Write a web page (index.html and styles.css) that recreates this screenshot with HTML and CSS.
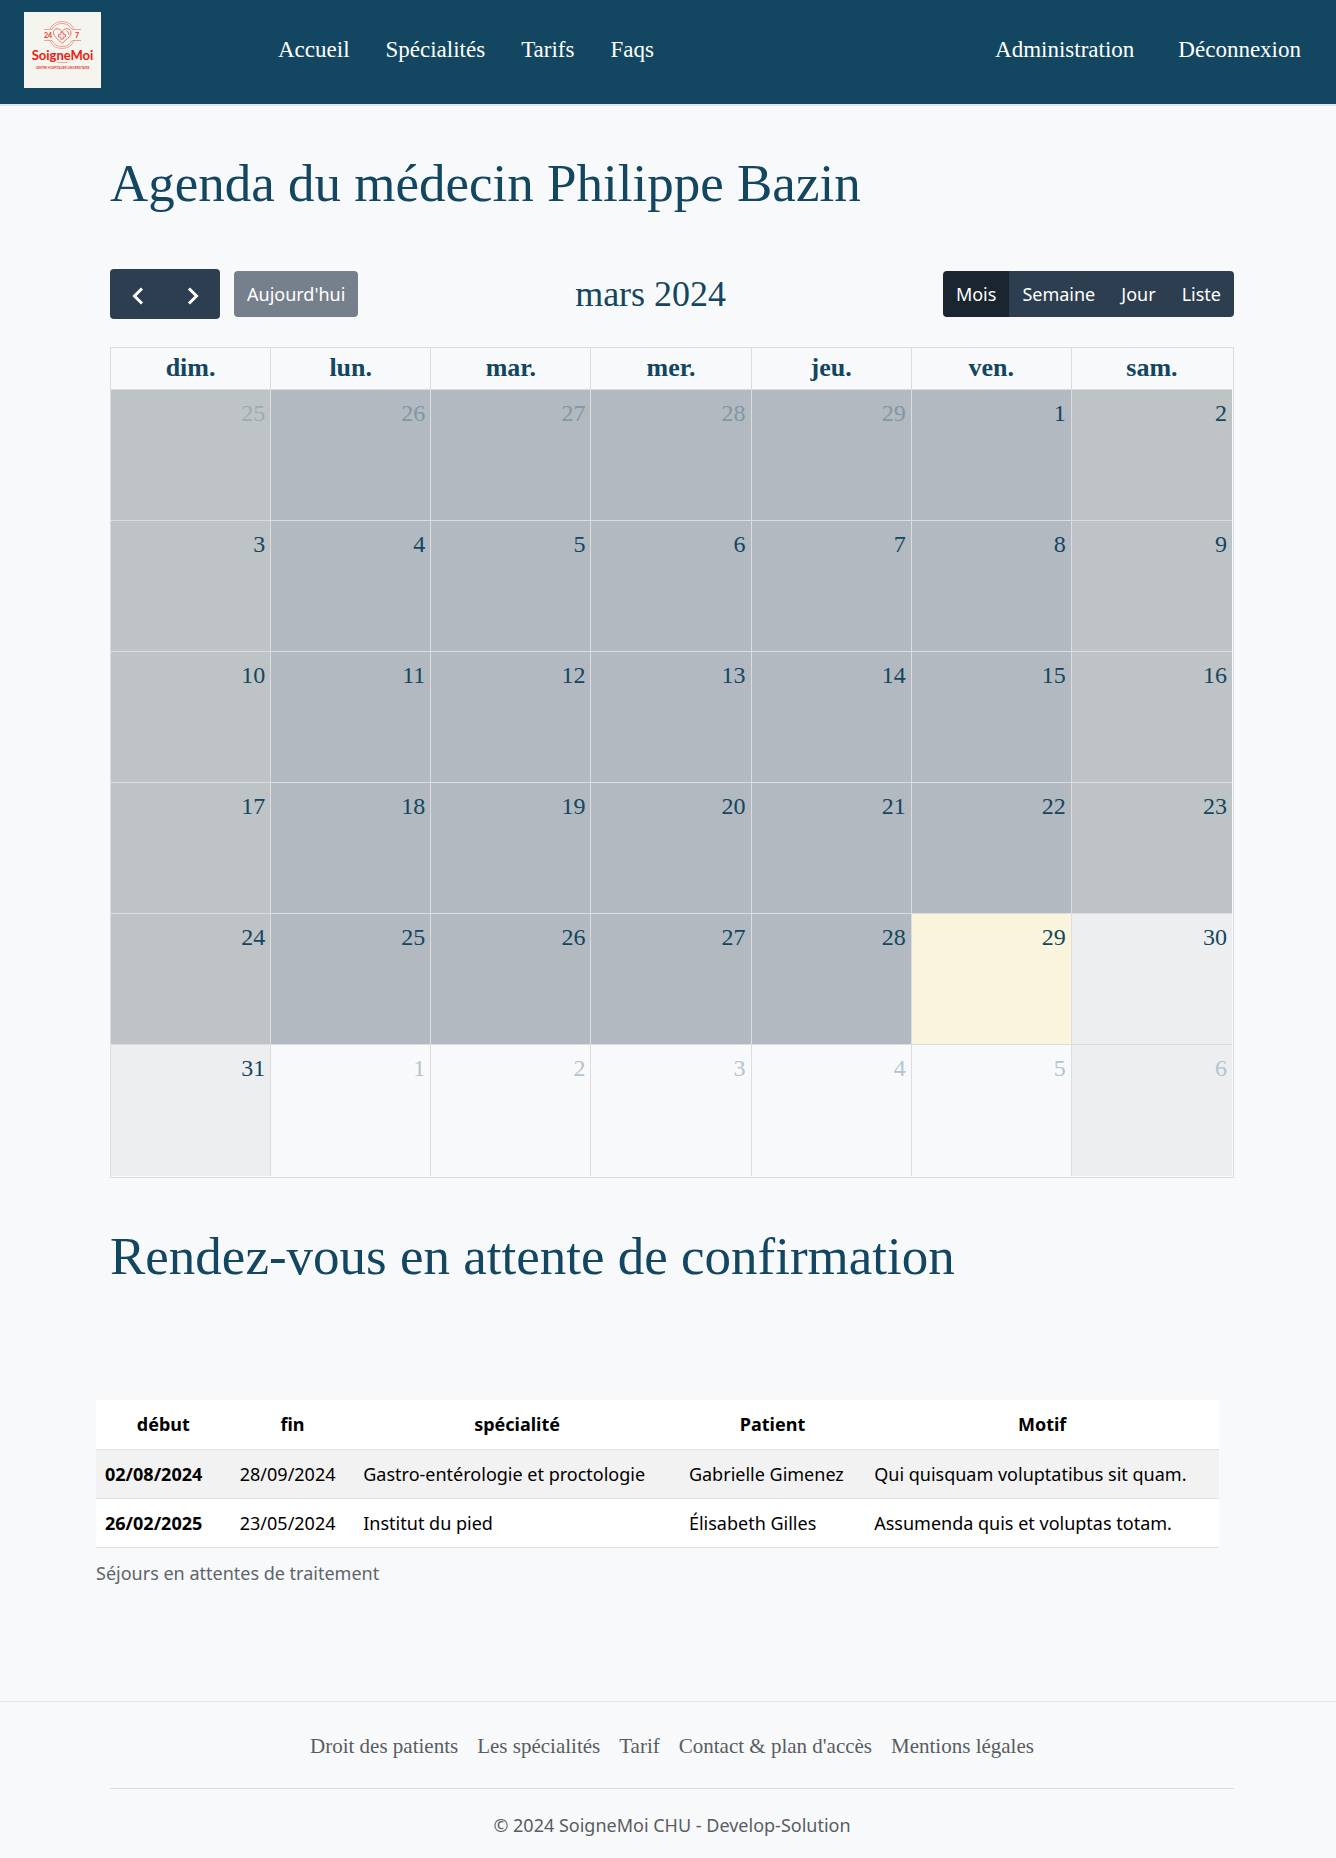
FILE: index.html
```html
<!DOCTYPE html>
<html lang="fr">
<head>
<meta charset="utf-8">
<meta name="viewport" content="width=device-width, initial-scale=1">
<title>SoigneMoi - Agenda du médecin</title>
<link rel="stylesheet" href="styles.css">
</head>
<body>
<header class="site-header">
  <a class="brand" href="#" aria-label="SoigneMoi">
    <svg class="logo" viewBox="0 0 77 76" role="img" aria-hidden="true">
      <rect width="77" height="76" fill="#f4f5ee"/>
      <g fill="none" stroke="#f0a098" stroke-width="1">
        <path d="M25.700 17.500A13.500 13.500 0 0 1 50.300 17.500M25.700 28.500A13.500 13.500 0 0 0 50.300 28.500"/>
        <path d="M27.900 17.500A11.500 11.500 0 0 1 48.100 17.500M27.900 28.500A11.500 11.500 0 0 0 48.100 28.500"/>
        <path d="M20 17.500H28M48 17.500H57M20 28.500H28M48 28.500H57M33.500 50.500H43.500"/>
      </g>
      <g fill="none" stroke="#e8695f" stroke-width="0.900">
        <path fill="#f4f5ee" d="M38 31.500L31 24.500C28.500 21.500 29 17 33 16.700C35.500 16.700 37 18 38 20C39 18 40.500 16.700 43 16.700C47.500 17 48 21.500 45.500 24.500Z"/>
        <path d="M36.800 20.300h2.400v2.200h2.300v2.400h-2.300v2.300h-2.400v-2.300h-2.300v-2.400h2.300zM42.500 18.800q3 1 2.300 4"/>
      </g>
      <g fill="#e8372c" class="logo-text">
        <text x="20" y="25.500" font-size="7">24</text>
        <text x="51" y="25.500" font-size="7">7</text>
        <text x="38.500" y="48" font-size="13" text-anchor="middle" fill="#f01a10">SoigneMoi</text>
        <text x="38.500" y="57" font-size="3" text-anchor="middle">CENTRE HOSPITALIER UNIVERSITAIRE</text>
      </g>
    </svg>
  </a>
  <nav class="main-nav" aria-label="Navigation principale">
    <a href="#">Accueil</a>
    <a href="#">Spécialités</a>
    <a href="#">Tarifs</a>
    <a href="#">Faqs</a>
  </nav>
  <nav class="user-nav" aria-label="Compte">
    <a href="#">Administration</a>
    <a href="#">Déconnexion</a>
  </nav>
</header>

<main>
  <section class="agenda">
    <h1 class="title">Agenda du médecin Philippe Bazin</h1>
    <div class="toolbar">
      <div class="toolbar-start">
        <div class="group">
          <button class="btn btn-icon" type="button" aria-label="Mois précédent"><svg width="12" height="18" viewBox="0 0 12 18"><path d="M10 1.500L2.500 9L10 16.500"/></svg></button>
          <button class="btn btn-icon" type="button" aria-label="Mois suivant"><svg width="12" height="18" viewBox="0 0 12 18"><path d="M2 1.500L9.500 9L2 16.500"/></svg></button>
        </div>
        <button class="btn btn-today" type="button" disabled>Aujourd'hui</button>
      </div>
      <h2 class="month">mars 2024</h2>
      <div class="group">
        <button class="btn btn-active" type="button" aria-pressed="true">Mois</button>
        <button class="btn" type="button">Semaine</button>
        <button class="btn" type="button">Jour</button>
        <button class="btn" type="button">Liste</button>
      </div>
    </div>
    <div class="calendar-frame">
    <table class="calendar">
      <thead>
        <tr><th>dim.</th><th>lun.</th><th>mar.</th><th>mer.</th><th>jeu.</th><th>ven.</th><th>sam.</th></tr>
      </thead>
      <tbody>
        <tr class="past"><td class="other">25</td><td class="other">26</td><td class="other">27</td><td class="other">28</td><td class="other">29</td><td>1</td><td>2</td></tr>
        <tr class="past"><td>3</td><td>4</td><td>5</td><td>6</td><td>7</td><td>8</td><td>9</td></tr>
        <tr class="past"><td>10</td><td>11</td><td>12</td><td>13</td><td>14</td><td>15</td><td>16</td></tr>
        <tr class="past"><td>17</td><td>18</td><td>19</td><td>20</td><td>21</td><td>22</td><td>23</td></tr>
        <tr class="past"><td>24</td><td>25</td><td>26</td><td>27</td><td>28</td><td class="today">29</td><td class="future">30</td></tr>
        <tr><td>31</td><td class="other">1</td><td class="other">2</td><td class="other">3</td><td class="other">4</td><td class="other">5</td><td class="other">6</td></tr>
      </tbody>
    </table>
    </div>
    <h2 class="title">Rendez-vous en attente de confirmation</h2>
  </section>

  <section class="pending">
    <table class="stays">
      <caption>Séjours en attentes de traitement</caption>
      <colgroup><col class="c-start"><col class="c-end"><col class="c-spec"><col class="c-patient"><col></colgroup>
      <thead>
        <tr><th scope="col">début</th><th scope="col">fin</th><th scope="col">spécialité</th><th scope="col">Patient</th><th scope="col">Motif</th></tr>
      </thead>
      <tbody>
        <tr><th scope="row">02/08/2024</th><td>28/09/2024</td><td>Gastro-entérologie et proctologie</td><td>Gabrielle Gimenez</td><td>Qui quisquam voluptatibus sit quam.</td></tr>
        <tr><th scope="row">26/02/2025</th><td>23/05/2024</td><td>Institut du pied</td><td>Élisabeth Gilles</td><td>Assumenda quis et voluptas totam.</td></tr>
      </tbody>
    </table>
  </section>
</main>

<footer class="site-footer">
  <nav class="footer-nav" aria-label="Pied de page">
    <a href="#">Droit des patients</a>
    <a href="#">Les spécialités</a>
    <a href="#">Tarif</a>
    <a href="#">Contact &amp; plan d'accès</a>
    <a href="#">Mentions légales</a>
  </nav>
  <p class="copyright">© 2024 SoigneMoi CHU - Develop-Solution</p>
</footer>
</body>
</html>
```
FILE: styles.css
```css
:root {
  --navy: #134660;
  --page: #f8f9fb;
  --line: #dddddd;
  --button: #2c3e50;
  --serif: "Liberation Serif", serif;
  --sans: "Noto Sans", sans-serif;
}

*, *::before, *::after { box-sizing: border-box; }

body {
  margin: 0;
  background: var(--page);
  color: #000;
  font: 18px/28px var(--sans);
}

/* Header */
.site-header {
  display: flex;
  align-items: flex-start;
  padding: 12px 35px 16px 24px;
  background: var(--navy);
  border-bottom: 2px solid #e6e3ee;
}
.brand { display: block; width: 77px; height: 76px; }
.logo { display: block; width: 77px; height: 76px; }
.logo-text { font-family: Lato, sans-serif; font-weight: 700; }
.main-nav, .user-nav {
  display: flex;
  padding-top: 24px;
  font: 23px/28px var(--serif);
}
.main-nav { gap: 36px; margin-left: 177px; }
.user-nav { gap: 44px; margin-left: auto; }
.site-header nav a { color: #fff; text-decoration: none; }

/* Agenda */
.agenda { padding: 48px 102px 0 110px; }
.title {
  margin: 0;
  color: var(--navy);
  font: 400 53px/58px var(--serif);
}
.toolbar {
  display: flex;
  align-items: center;
  justify-content: space-between;
  margin: 57px 0 28px;
}
.toolbar-start { display: flex; align-items: center; gap: 14px; }
.group {
  display: flex;
  overflow: hidden;
  border-radius: 4px;
}
.btn {
  height: 46px;
  padding: 0 13px;
  border: 0;
  background: var(--button);
  color: #fff;
  font: 18px/28px var(--sans);
}
.btn-icon { width: 55px; height: 50px; padding: 0; }
.btn-icon svg { fill: none; stroke: #fff; stroke-width: 3; vertical-align: middle; }
.btn-today { border-radius: 4px; background: #76808c; }
.btn-active { background: #1a252f; }
.month {
  margin: 0;
  color: var(--navy);
  font: 400 36px/40px var(--serif);
}

.calendar-frame {
  margin-bottom: 49px;
  padding: 0 1px 1px 0;
  border: 1px solid var(--line);
}
.calendar {
  width: 100%;
  border-spacing: 0;
  table-layout: fixed;
  color: var(--navy);
  font: 24px/36px var(--serif);
}
.calendar th {
  height: 42px;
  padding: 0 0 2px;
  border-bottom: 1px solid var(--line);
  font-size: 26px;
  font-weight: 700;
}
.calendar td {
  height: 131px;
  padding: 5px 5px 0 0;
  border-bottom: 1px solid var(--line);
  text-align: right;
  vertical-align: top;
}
.calendar th:not(:last-child), .calendar td:not(:last-child) { border-right: 1px solid var(--line); }
.calendar tr:last-child td { border-bottom: 0; }
.calendar td:first-child, .calendar td:last-child { background: #edeef0; }
.calendar .past td { background: #b2b9c0; }
.calendar .past td:first-child, .calendar .past td:last-child { background: #bec3c6; }
.calendar .past .today { background: #faf4dc; }
.calendar .past .future:last-child { background: #edeef0; }
.calendar .other { color: #b3c4ce; }
.calendar .past .other { color: #8297a5; }
.calendar .past .other:first-child { color: #9bacb6; }

/* Pending stays */
.pending { padding: 115px 117px 0 96px; }
.stays {
  width: 100%;
  border-collapse: collapse;
  table-layout: fixed;
  background: #fff;
}
.stays caption {
  padding: 11px 0;
  caption-side: bottom;
  color: #5f6469;
  text-align: left;
}
.stays th, .stays td {
  height: 49px;
  padding: 0 9px;
  border-bottom: 1px solid #dee2e6;
  text-align: left;
}
.stays thead th { text-align: center; }
.stays tbody tr:first-child { background: #f2f2f2; }
.c-start { width: 12%; }
.c-end { width: 11%; }
.c-spec { width: 29%; }
.c-patient { width: 16.5%; }

/* Footer */
.site-footer {
  margin-top: 103px;
  padding: 0 102px 0 110px;
  border-top: 1px solid #e6e7e9;
  color: #585d62;
}
.footer-nav {
  display: flex;
  justify-content: center;
  gap: 19px;
  padding: 30px 0 28px;
  border-bottom: 1px solid var(--line);
  font: 21px/28px var(--serif);
}
.footer-nav a { color: inherit; text-decoration: none; }
.copyright { margin: 0; padding: 22px 0 19px; text-align: center; }
```
